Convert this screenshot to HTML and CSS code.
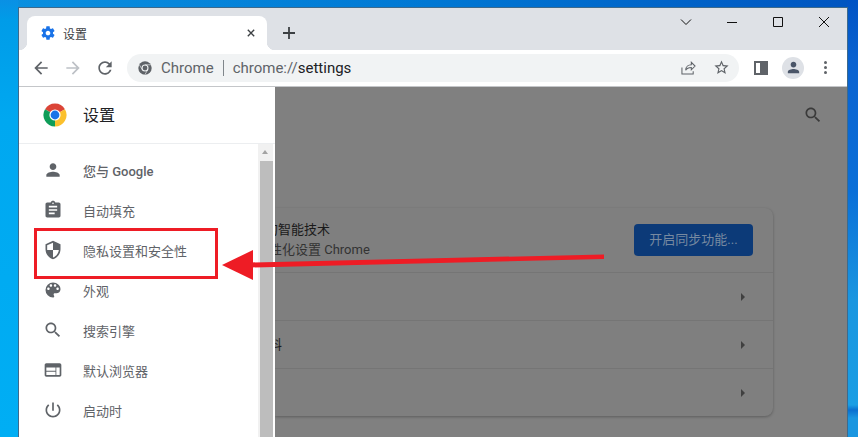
FILE: index.html
```html
<!DOCTYPE html>
<html lang="zh-CN">
<head>
    <meta charset="utf-8">
    <title>设置</title>
    <link rel="stylesheet" href="styles.css">
</head>
<body>
<div class="desktop">
    <div class="window">
        <div class="tabstrip">
            <div class="tab">
                <svg class="tab-gear" viewBox="0 0 24 24"><path d="M19.43 12.98c.04-.32.07-.64.07-.98s-.03-.66-.07-.98l2.11-1.65c.19-.15.24-.42.12-.64l-2-3.46c-.12-.22-.39-.3-.61-.22l-2.49 1c-.52-.4-1.08-.73-1.69-.98l-.38-2.65C14.46 2.18 14.25 2 14 2h-4c-.25 0-.46.18-.49.42l-.38 2.65c-.61.25-1.17.59-1.69.98l-2.49-1c-.23-.09-.49 0-.61.22l-2 3.46c-.13.22-.07.49.12.64l2.11 1.65c-.04.32-.07.65-.07.98s.03.66.07.98l-2.11 1.65c-.19.15-.24.42-.12.64l2 3.46c.12.22.39.3.61.22l2.49-1c.52.4 1.08.73 1.69.98l.38 2.65c.03.24.24.42.49.42h4c.25 0 .46-.18.49-.42l.38-2.65c.61-.25 1.17-.59 1.69-.98l2.49 1c.23.09.49 0 .61-.22l2-3.46c.12-.22.07-.49-.12-.64l-2.11-1.65zM12 15.5c-1.93 0-3.5-1.57-3.5-3.5s1.57-3.5 3.5-3.5 3.5 1.57 3.5 3.5-1.57 3.5-3.5 3.5z"/></svg>
                <span class="tab-title">设置</span>
                <svg class="tab-close" viewBox="0 0 10 10"><path d="M1 1l8 8M9 1l-8 8"/></svg>
            </div>
            <svg class="new-tab" viewBox="0 0 12 12"><path d="M6 0v12M0 6h12"/></svg>
            <div class="win-controls">
                <svg viewBox="0 0 12 12"><path d="M1 3.5l5 5 5-5"/></svg>
                <svg viewBox="0 0 12 12"><path d="M1 6.5h10"/></svg>
                <svg viewBox="0 0 12 12"><path d="M1.5 1.5h9v9h-9z"/></svg>
                <svg viewBox="0 0 12 12"><path d="M1 1l10 10M11 1L1 11"/></svg>
            </div>
        </div>

        <div class="toolbar">
            <svg class="nav-icon" viewBox="0 0 24 24"><path d="M20 11H7.83l5.59-5.59L12 4l-8 8 8 8 1.41-1.41L7.83 13H20v-2z"/></svg>
            <svg class="nav-icon disabled" viewBox="0 0 24 24"><path d="M4 11h12.17l-5.59-5.59L12 4l8 8-8 8-1.41-1.41L16.17 13H4v-2z"/></svg>
            <svg class="nav-icon" viewBox="0 0 24 24"><path d="M17.65 6.35C16.2 4.9 14.21 4 12 4c-4.42 0-7.99 3.58-7.99 8s3.57 8 7.99 8c3.73 0 6.84-2.55 7.73-6h-2.08c-.82 2.33-3.04 4-5.65 4-3.31 0-6-2.69-6-6s2.69-6 6-6c1.66 0 3.14.69 4.22 1.78L13 11h7V4l-2.35 2.35z"/></svg>
            <div class="omnibox">
                <svg class="omni-logo" viewBox="0 0 24 24">
                    <circle cx="12" cy="12" r="11.5" fill="#5f6368"/>
                    <circle cx="12" cy="12" r="6" fill="#f1f3f4"/>
                    <circle cx="12" cy="12" r="4.2" fill="#5f6368"/>
                    <path d="M12 6.5h10M7.2 14.8l-5-8.6M16.8 14.8l-5 8.6" stroke="#f1f3f4" stroke-width="1.1"/>
                </svg>
                <span class="omni-chip">Chrome</span>
                <span class="omni-sep"></span>
                <span class="omni-url"><span class="omni-scheme">chrome://</span>settings</span>
                <svg class="omni-share" viewBox="0 0 16 16"><path d="M1 8v7h12v-3M5 11c0-4 3-6 6-6V2.500l4 4-4 4V8c-3 0-5 1-6 3z"/></svg>
                <svg class="omni-star" viewBox="0 0 24 24"><path d="M22 9.24l-7.19-.62L12 2 9.19 8.63 2 9.24l5.46 4.73L5.82 21 12 17.27 18.18 21l-1.63-7.03L22 9.24zM12 15.4l-3.76 2.27 1-4.28-3.32-2.88 4.38-.38L12 6.1l1.710 4.04 4.38.38-3.32 2.88 1 4.28L12 15.4z"/></svg>
            </div>
            <div class="side-panel"></div>
            <div class="avatar">
                <svg viewBox="0 0 24 24"><path d="M12 12c2.210 0 4-1.790 4-4s-1.790-4-4-4-4 1.790-4 4 1.790 4 4 4zm0 2c-2.670 0-8 1.340-8 4v2h16v-2c0-2.660-5.330-4-8-4z"/></svg>
            </div>
            <div class="menu-dots"><i></i><i></i><i></i></div>
        </div>

        <div class="page">
            <aside class="sidebar">
                <div class="side-head">
                    <svg class="logo" viewBox="0 0 24 24">
                        <path fill="#db4437" d="M12 12L2.040 6.250A11.500 11.500 0 0 1 21.960 6.250z"/>
                        <path fill="#fbc02d" d="M12 12L21.960 6.250A11.500 11.500 0 0 1 12 23.500z"/>
                        <path fill="#0f9d58" d="M12 12L12 23.500A11.500 11.500 0 0 1 2.040 6.250z"/>
                        <circle cx="12" cy="12" r="5.600" fill="#fff"/>
                        <circle cx="12" cy="12" r="4.400" fill="#1a73e8"/>
                    </svg>
                    <span class="side-title">设置</span>
                </div>
                <div class="side-body">
                    <ul class="menu">
                        <li><svg viewBox="0 0 24 24"><path d="M12 12c2.210 0 4-1.790 4-4s-1.790-4-4-4-4 1.790-4 4 1.790 4 4 4zm0 2c-2.670 0-8 1.340-8 4v2h16v-2c0-2.660-5.330-4-8-4z"/></svg><span class="menu-strong">您与 Google</span></li>
                        <li><svg viewBox="0 0 24 24"><path d="M19 3h-4.180C14.400 1.840 13.300 1 12 1c-1.300 0-2.400.84-2.820 2H5c-1.100 0-2 .9-2 2v14c0 1.100.9 2 2 2h14c1.100 0 2-.9 2-2V5c0-1.100-.9-2-2-2zm-7 0c.55 0 1 .45 1 1s-.45 1-1 1-1-.45-1-1 .45-1 1-1zm2 14H7v-2h7v2zm3-4H7v-2h10v2zm0-4H7V7h10v2z"/></svg><span>自动填充</span></li>
                        <li><svg viewBox="0 0 24 24"><path d="M12 1L3 5v6c0 5.550 3.840 10.740 9 12 5.160-1.260 9-6.450 9-12V5l-9-4zm0 10.990h7c-.53 4.120-3.280 7.790-7 8.940V12H5V6.300l7-3.110v8.800z"/></svg><span>隐私设置和安全性</span></li>
                        <li><svg viewBox="0 0 24 24"><path d="M12 3a9 9 0 0 0 0 18c.83 0 1.500-.67 1.500-1.500 0-.39-.15-.74-.39-1.010-.23-.26-.38-.61-.38-.99 0-.83.67-1.500 1.500-1.500H16c2.760 0 5-2.240 5-5 0-4.420-4.030-8-9-8zm-5.500 9c-.83 0-1.500-.67-1.500-1.500S5.670 9 6.500 9 8 9.670 8 10.500 7.330 12 6.500 12zm3-4C8.670 8 8 7.330 8 6.500S8.670 5 9.500 5s1.500.67 1.500 1.500S10.330 8 9.500 8zm5 0c-.83 0-1.500-.67-1.500-1.500S13.670 5 14.500 5s1.500.67 1.500 1.500S15.330 8 14.500 8zm3 4c-.83 0-1.500-.67-1.500-1.500S16.670 9 17.500 9s1.500.67 1.500 1.500-.67 1.500-1.500 1.500z"/></svg><span>外观</span></li>
                        <li><svg viewBox="0 0 24 24"><path d="M15.500 14h-.79l-.28-.27C15.410 12.590 16 11.110 16 9.500 16 5.910 13.090 3 9.500 3S3 5.910 3 9.500 5.910 16 9.500 16c1.610 0 3.090-.59 4.230-1.570l.27.28v.79l5 4.990L20.490 19l-4.990-5zm-6 0C7.010 14 5 11.990 5 9.500S7.010 5 9.500 5 14 7.010 14 9.500 11.990 14 9.500 14z"/></svg><span>搜索引擎</span></li>
                        <li><svg viewBox="0 0 24 24"><path d="M20 4H4c-1.100 0-1.990.9-1.990 2L2 18c0 1.100.9 2 2 2h16c1.100 0 2-.9 2-2V6c0-1.100-.9-2-2-2zm-5 14H4v-4h11v4zm0-5H4V9h11v4zm5 5h-4V9h4v9z"/></svg><span>默认浏览器</span></li>
                        <li><svg viewBox="0 0 24 24"><path d="M13 3h-2v10h2V3zm4.830 2.170l-1.420 1.420C17.990 7.860 19 9.810 19 12c0 3.870-3.130 7-7 7s-7-3.130-7-7c0-2.190 1.010-4.140 2.580-5.420L6.170 5.170C4.230 6.820 3 9.260 3 12c0 4.970 4.030 9 9 9s9-4.030 9-9c0-2.740-1.230-5.180-3.170-6.830z"/></svg><span>启动时</span></li>
                    </ul>
                    <div class="scrollbar">
                        <div class="scroll-up"></div>
                        <div class="scroll-thumb"></div>
                    </div>
                </div>
            </aside>

            <main class="content">
                <div class="content-head">
                    <svg class="page-search" viewBox="0 0 24 24"><path d="M15.500 14h-.79l-.28-.27C15.410 12.590 16 11.110 16 9.500 16 5.910 13.090 3 9.500 3S3 5.910 3 9.500 5.910 16 9.500 16c1.610 0 3.090-.59 4.230-1.570l.27.28v.79l5 4.990L20.490 19l-4.990-5zm-6 0C7.010 14 5 11.990 5 9.500S7.010 5 9.500 5 14 7.010 14 9.500 11.990 14 9.500 14z"/></svg>
                </div>
                <section class="card">
                    <div class="sync-row">
                        <div class="sync-text">
                            <div class="sync-title">的智能技术</div>
                            <div class="sync-sub">性化设置 Chrome</div>
                        </div>
                        <div class="sync-btn">开启同步功能...</div>
                    </div>
                    <div class="card-row"><i class="caret"></i></div>
                    <div class="card-row"><span class="row-cut">料</span><i class="caret"></i></div>
                    <div class="card-row"><i class="caret"></i></div>
                </section>
            </main>
        </div>
    </div>

    <div class="callout-box"></div>
    <svg class="callout-arrow" viewBox="0 0 858 437">
        <path d="M604 254.500L604 259L250 267.500L250 262.500z"/>
        <path d="M222 265L253 250L253 280z"/>
    </svg>
</div>
</body>
</html>
```

FILE: styles.css
```css
* {
    box-sizing: border-box;
}

html, body {
    margin: 0;
    padding: 0;
}

body {
    font-family: Roboto, "Noto Sans CJK SC", sans-serif;
    overflow: hidden;
}

svg {
    display: block;
    flex: none;
}

.desktop {
    position: relative;
    width: 858px;
    height: 437px;
    padding: 7px 10px 0 18px;
    overflow: hidden;
    background:
        linear-gradient(180deg, #0053c4 0, #0a62d0 60px, #0a6fd8 190px, #1a96e0 300px, #1a9ee4 405px, #0a6fd0 410px, #1a96e0 418px) right / 11px 100% no-repeat,
        linear-gradient(180deg, #0a90e4 0, #009ce8 20px, #00a8f0 120px, #00aef4 437px) left / 18px 100% no-repeat,
        linear-gradient(90deg, #0a90e0, #0078d4 50%, #0054c0);
}

.window {
    display: flex;
    flex-direction: column;
    width: 830px;
    height: 430px;
    border: 1px solid #3d6a8c;
    border-bottom: 0;
    background: #fff;
}

/* tab strip */
.tabstrip {
    display: flex;
    align-items: flex-end;
    height: 42px;
    padding-left: 8px;
    background: #dee1e6;
}

.tab {
    position: relative;
    display: flex;
    align-items: center;
    width: 240px;
    height: 34px;
    padding: 0 11px 0 13px;
    border-radius: 8px 8px 0 0;
    background: #fff;
}

.tab::before,
.tab::after {
    content: "";
    position: absolute;
    bottom: 0;
    width: 8px;
    height: 8px;
}

.tab::before {
    left: -8px;
    background: radial-gradient(circle at 0 0, #dee1e6 8px, #fff 8.500px);
}

.tab::after {
    right: -8px;
    background: radial-gradient(circle at 100% 0, #dee1e6 8px, #fff 8.500px);
}

.tab-gear {
    width: 16px;
    height: 16px;
    fill: #1a73e8;
}

.tab-title {
    margin-left: 7px;
    font-size: 12px;
    color: #3c4043;
}

.tab-close {
    width: 8px;
    height: 8px;
    margin-left: auto;
    margin-right: 1px;
    fill: none;
    stroke: #3c4043;
    stroke-width: 1.700;
}

.new-tab {
    width: 12px;
    height: 12px;
    margin: 0 0 11px 16px;
    fill: none;
    stroke: #3c4043;
    stroke-width: 1.800;
}

.win-controls {
    display: flex;
    align-items: center;
    gap: 34px;
    margin-left: auto;
    margin-right: 17px;
    align-self: flex-start;
    padding-top: 8px;
}

.win-controls svg {
    width: 12px;
    height: 12px;
    fill: none;
    stroke: #111;
    stroke-width: 1;
}

/* toolbar */
.toolbar {
    display: flex;
    align-items: center;
    height: 37px;
    padding: 0 0 1px 12px;
    border-bottom: 1px solid #c4c6c9;
    background: #fff;
}

.nav-icon {
    width: 20px;
    height: 20px;
    margin-right: 12px;
    fill: #5f6368;
}

.nav-icon.disabled {
    fill: #bdc1c6;
}

.omnibox {
    display: flex;
    align-items: center;
    width: 612px;
    height: 28px;
    padding: 0 9px 0 11px;
    border-radius: 14px;
    background: #f1f3f4;
    font-size: 15px;
    line-height: 28px;
}

.omni-logo {
    width: 14px;
    height: 14px;
}

.omni-chip {
    margin-left: 9px;
    color: #5f6368;
}

.omni-sep {
    width: 1px;
    height: 16px;
    margin: 0 9px;
    background: #80868b;
}

.omni-url {
    color: #202124;
}

.omni-scheme {
    color: #5f6368;
}

.omni-share {
    width: 15px;
    height: 15px;
    margin-left: auto;
    fill: none;
    stroke: #5f6368;
    stroke-width: 1.100;
}

.omni-star {
    width: 17px;
    height: 17px;
    margin-left: 17px;
    fill: #5f6368;
}

.side-panel {
    width: 14px;
    height: 14px;
    margin-left: 15px;
    border: solid #5f6368;
    border-width: 2px 8px 2px 2px;
    background: #fff;
}

.avatar {
    display: flex;
    align-items: center;
    justify-content: center;
    width: 22px;
    height: 22px;
    margin-left: 14px;
    border-radius: 50%;
    background: #dee1e6;
}

.avatar svg {
    width: 17px;
    height: 17px;
    fill: #4a5568;
}

.menu-dots {
    display: flex;
    flex-direction: column;
    gap: 2px;
    margin-left: 20px;
}

.menu-dots i {
    width: 3px;
    height: 3px;
    border-radius: 50%;
    background: #5f6368;
}

/* page */
.page {
    display: flex;
    flex: 1;
    min-height: 0;
    overflow: hidden;
}

.sidebar {
    position: relative;
    z-index: 1;
    display: flex;
    flex-direction: column;
    flex: none;
    width: 256px;
    background: #fff;
}

.side-head {
    display: flex;
    align-items: center;
    height: 57px;
    padding: 0 0 1px 24px;
    border-bottom: 1px solid #eceef0;
}

.logo {
    width: 24px;
    height: 24px;
}

.side-title {
    margin-left: 16px;
    padding-bottom: 2px;
    font-size: 16px;
    color: #202124;
}

.side-body {
    display: flex;
    flex: 1;
    min-height: 0;
}

.menu {
    flex: 1;
    margin: 0;
    padding: 6px 0 0;
    list-style: none;
}

.menu li {
    display: flex;
    align-items: center;
    height: 40px;
    padding-left: 24px;
    font-size: 13px;
    color: #5f6368;
}

.menu svg {
    width: 20px;
    height: 20px;
    margin-right: 20px;
    fill: #5f6368;
}

.menu-strong {
    font-weight: 500;
}

.scrollbar {
    display: flex;
    flex-direction: column;
    flex: none;
    width: 17px;
    padding-right: 2px;
    background: #f1f1f1;
    box-shadow: inset -2px 0 0 #fff;
}

.scroll-up {
    position: relative;
    height: 17px;
}

.scroll-up::after {
    content: "";
    position: absolute;
    left: 4px;
    top: 6px;
    border: 3.500px solid transparent;
    border-top: 0;
    border-bottom: 4px solid #a3a3a3;
}

.scroll-thumb {
    flex: 1;
    margin-left: 2px;
    background: #bdbdbd;
}

/* dimmed settings page, its left part lies behind the sidebar */
.content {
    flex: 1;
    min-width: 0;
    background: #808080;
}

.content-head {
    display: flex;
    justify-content: flex-end;
    height: 121px;
    padding: 18px 24px 0 0;
}

.page-search {
    width: 20px;
    height: 20px;
    fill: #3a3a3a;
}

.card {
    width: 498px;
    border-radius: 0 8px 8px 0;
    background: #7f7f7f;
    box-shadow: 0 1px 3px rgba(0, 0, 0, .28);
    font-size: 13px;
    color: #1a1a1a;
}

.sync-row {
    display: flex;
    align-items: center;
    justify-content: space-between;
    height: 64px;
    padding-right: 20px;
}

.sync-title {
    margin-left: -10px;
    line-height: 20px;
}

.sync-sub {
    margin-left: -6px;
    line-height: 20px;
    color: #333;
}

.sync-btn {
    width: 119px;
    height: 32px;
    border-radius: 4px;
    background: #0c3a78;
    color: #7689a0;
    font-size: 13px;
    line-height: 32px;
    text-align: center;
}

.card-row {
    display: flex;
    align-items: center;
    justify-content: flex-end;
    height: 48px;
    padding-right: 28px;
    border-top: 1px solid #757575;
}

.row-cut {
    margin: 0 auto 2px -6px;
}

.caret {
    border: 4px solid transparent;
    border-left: 4px solid #404040;
    border-right: 0;
}

/* red annotation laid over the screenshot */
.callout-box {
    position: absolute;
    z-index: 2;
    left: 34px;
    top: 228px;
    width: 184px;
    height: 51px;
    border: 3px solid #ee1c25;
}

.callout-arrow {
    position: absolute;
    z-index: 2;
    left: 0;
    top: 0;
    width: 858px;
    height: 437px;
    fill: #ee1c25;
}
```
